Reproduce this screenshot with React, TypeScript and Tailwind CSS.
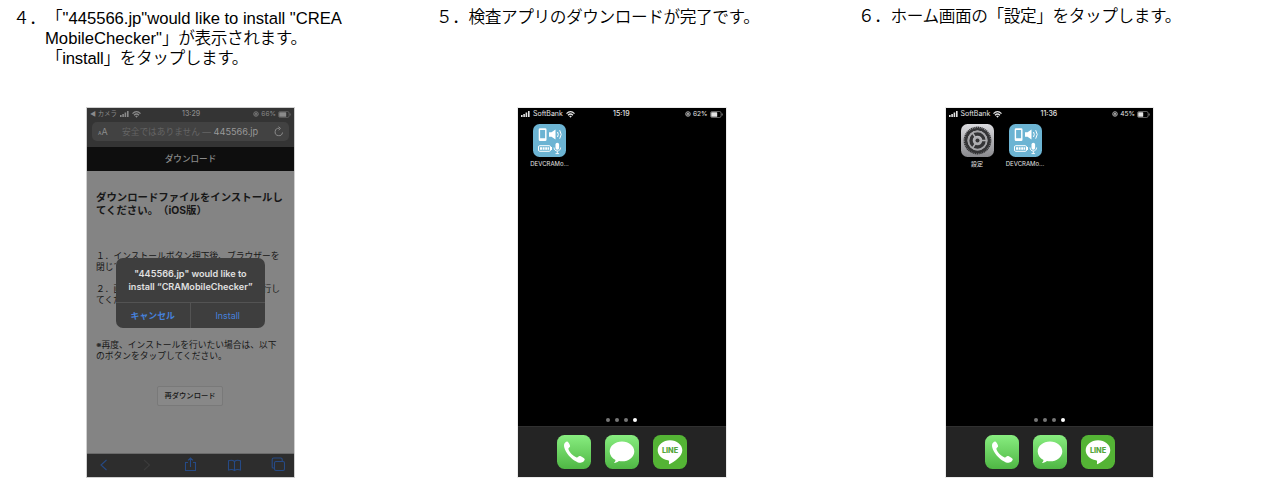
import type { ReactNode } from "react";

const sans = "font-['Liberation_Sans','Noto_Sans_CJK_JP',sans-serif]";
const ui = "font-['Inter','Noto_Sans_CJK_JP',sans-serif]";

function Wifi() {
  return (
    <svg width="9" height="7" viewBox="0 0 18 14" fill="none" stroke="currentColor" strokeWidth="2.6">
      <path d="M1 5.2c4.8-4.6 11.2-4.6 16 0M4 8.4c3-2.8 7-2.8 10 0" />
      <path d="M6.4 10.6c1.6-1.2 3.6-1.2 5.2 0L9 13.4z" fill="currentColor" stroke="none" />
    </svg>
  );
}

function Signal() {
  return (
    <svg width="9" height="6" viewBox="0 0 9 6" fill="currentColor">
      <path d="M0 4h1.6v2H0zM2.3 3h1.6v3H2.3zM4.6 1.5h1.6V6H4.6zM7 0h1.6v6H7z" />
    </svg>
  );
}

function Battery({ level }: { level: number }) {
  return (
    <svg width="13" height="7" viewBox="0 0 13 7" fill="none">
      <rect x=".5" y=".5" width="10.6" height="6" rx="1.6" stroke="currentColor" strokeWidth=".7" opacity=".6" />
      <rect x="1.2" y="1.2" width={level} height="4.6" rx=".6" fill="currentColor" />
      <path d="M12.2 2.5v2" stroke="currentColor" strokeWidth=".8" opacity=".7" />
    </svg>
  );
}

function Lock() {
  return (
    <svg width="6" height="6" viewBox="0 0 6 6" fill="none" stroke="currentColor" strokeWidth=".7">
      <circle cx="3" cy="3" r="2.3" />
      <path d="M2 2.8h2v1.2H2zM2.4 2.7V2h1.2v.7" strokeWidth=".6" />
    </svg>
  );
}

function Status({ left, time, pct, level }: { left: ReactNode; time: string; pct: string; level: number }) {
  return (
    <div className="grid h-3 shrink-0 grid-cols-[84px_40px_1fr] items-center pl-[3px] pr-[3px] text-[6.6px] leading-3 whitespace-nowrap">
      <div className="flex items-center gap-[3px]">{left}</div>
      <div className="pl-[8px] text-[7px] font-medium">{time}</div>
      <div className="flex items-center justify-end gap-[2px]">
        <Lock />
        <span>{pct}</span>
        <Battery level={level} />
      </div>
    </div>
  );
}

function CheckerIcon() {
  return (
    <svg width="33" height="33" viewBox="0 0 33 33">
      <rect width="33" height="33" rx="6.500" fill="#6cb4d3" />
      <g fill="#fff">
        <path fillRule="evenodd" d="M7 4.3h5.2A1.3 1.3 0 0 1 13.500 5.600v10.200a1.300 1.300 0 0 1-1.300 1.300H7a1.300 1.300 0 0 1-1.300-1.300V5.600A1.300 1.300 0 0 1 7 4.300zM7.100 6v8.300h5V6z" />
        <path d="M16 8.200h2.500L22.500 5.500v10L18.500 12.800H16z" />
      </g>
      <path d="M24.500 8q1.600 2.400 0 5M26.700 6.200q3 4.200 0 8.500" fill="none" stroke="#fff" strokeWidth="1" />
      <rect x="5.500" y="21.700" width="12" height="5.600" rx="1.200" fill="none" stroke="#fff" strokeWidth="1" />
      <path d="M7 23.200h2v2.600H7zm2.600 0h2v2.600h-2zm2.600 0h2v2.600h-2zm2.500 0h1.500v2.600h-1.500zM18 23h1v3h-1z" fill="#fff" />
      <rect x="22.500" y="18.800" width="3.600" height="7" rx="1.800" fill="#fff" />
      <path d="M21 23.500c0 4.700 6.600 4.700 6.600 0M24.300 27v2.800M22.500 29.600h3.600" fill="none" stroke="#fff" strokeWidth=".9" />
    </svg>
  );
}

function SettingsIcon() {
  return (
    <svg width="33" height="33" viewBox="0 0 33 33" fill="none">
      <defs>
        <linearGradient id="metal" x2="0" y2="1">
          <stop stopColor="#dcdce0" />
          <stop offset="1" stopColor="#89898d" />
        </linearGradient>
      </defs>
      <rect width="33" height="33" rx="6.500" fill="url(#metal)" />
      <circle cx="16.500" cy="16.500" r="13" stroke="#343436" strokeWidth="1.800" strokeDasharray="1.300 .5" />
      <circle cx="16.500" cy="16.500" r="11.300" stroke="#343436" strokeWidth="2.600" />
      <circle cx="16.500" cy="16.500" r="9.300" stroke="#a4a4a7" strokeWidth="1.400" />
      <circle cx="16.500" cy="16.500" r="6.500" stroke="#343436" strokeWidth="3.400" />
      <path d="M16.500 16.500h9M16.500 16.500l-5-7.500M16.500 16.500l-5 7.500" stroke="#aeaeb1" strokeWidth="1.500" />
      <circle cx="16.500" cy="16.500" r="3.400" fill="#aeaeb1" />
      <circle cx="16.500" cy="16.500" r="2" fill="#343436" />
    </svg>
  );
}

function Phone() {
  return (
    <svg width="34" height="34" viewBox="0 0 34 34">
      <defs>
        <linearGradient id="green" x2="0" y2="1">
          <stop stopColor="#88ed80" />
          <stop offset="1" stopColor="#4fb744" />
        </linearGradient>
      </defs>
      <rect width="34" height="34" rx="7.500" fill="url(#green)" />
      <path d="M7 10.200C7 8.300 9 6.300 10.300 6.500c1 .2 2.900 3.500 2.800 4.700 0 1.100-2 1.600-1.700 2.800.8 3 4.800 7.300 8.200 8.400 1.300.4 1.800-1.500 3-1.500 1.300 0 4.900 2 5.100 3.200.2 1.400-1.800 3.700-4.200 3.700C17.500 27.800 7 17.500 7 10.200z" fill="#fff" />
    </svg>
  );
}

function Messages() {
  return (
    <svg width="34" height="34" viewBox="0 0 34 34">
      <rect width="34" height="34" rx="7.500" fill="url(#green)" />
      <path d="M17 6.400c-6.900 0-12.300 4.400-12.300 10 0 3.600 2.300 6.700 5.800 8.500-.1 1.200-.8 2.200-1.600 3 2.200-.1 3.800-.9 5-1.900 1 .2 2 .3 3.100.3 6.900 0 12.300-4.400 12.300-9.900s-5.400-10-12.300-10z" fill="#fff" />
    </svg>
  );
}

function Line() {
  return (
    <svg width="34" height="34" viewBox="0 0 34 34">
      <rect width="34" height="34" rx="7.500" fill="#54b435" />
      <path d="M17 5.300c-6.800 0-12.300 4.500-12.300 10 0 4.900 4.300 9 10.200 9.900 1.400.3 1.300.9 1 3.500 0 .6.400.7.900.4 4.600-2.500 12.500-7.500 12.500-13.800 0-5.500-5.500-10-12.300-10z" fill="#fff" />
      <text x="17" y="18" textAnchor="middle" fontFamily="Inter" fontWeight="800" fontSize="7.300" fill="#54a63a">LINE</text>
    </svg>
  );
}

function HomeApp({ icon, label }: { icon: ReactNode; label: string }) {
  return (
    <div className="flex w-[33px] flex-col items-center">
      {icon}
      <span className="mt-[2px] text-[6px] leading-[9px] whitespace-nowrap">{label}</span>
    </div>
  );
}

function Home({ time, pct, level, settings }: { time: string; pct: string; level: number; settings?: boolean }) {
  return (
    <div className={`flex h-[369px] w-[207.5px] flex-col bg-black text-[#e4e4e4] outline-1 outline-[#d8d8d8]/50 ${ui}`}>
      <Status
        left={<><Signal /><span className="text-[7px]">SoftBank</span><Wifi /></>}
        time={time}
        pct={pct}
        level={level}
      />
      <div className="flex flex-1 gap-[15px] pl-[15px] pt-[4px]">
        {settings && <HomeApp icon={<SettingsIcon />} label="設定" />}
        <HomeApp icon={<CheckerIcon />} label="DEVCRAMo..." />
      </div>
      <div className="flex h-[8px] justify-center gap-[5px]">
        <i className="size-[4px] rounded-full bg-[#777]" />
        <i className="size-[4px] rounded-full bg-[#777]" />
        <i className="size-[4px] rounded-full bg-[#777]" />
        <i className="size-[4px] rounded-full bg-white" />
      </div>
      <div className="flex h-[51px] gap-[14px] border-t border-[#303030] bg-[#242424] pl-[39px] pt-[8px]">
        <Phone />
        <Messages />
        <Line />
      </div>
    </div>
  );
}

function Browser() {
  return (
    <div className={`relative flex h-[369px] w-[207px] flex-col bg-[#848484] whitespace-nowrap text-[#171717] outline-1 outline-[#d0d0d0] ${ui}`}>
      <div className="h-[39px] bg-[#343434] text-[#8b8b8b]">
        <Status
          left={<><span className="text-[6.400px]">◀ カメラ</span><Signal /><Wifi /></>}
          time="13:29"
          pct="66%"
          level={7}
        />
        <div className="mx-[5px] mt-[2px] flex h-[19px] items-center rounded-[5px] bg-[#424242] pl-[6px] pr-[4px]">
          <span className="w-6 text-[7px]">ᴀ<span className="text-[9px]">A</span></span>
          <span className="flex-1 text-[8.700px] leading-3 text-[#656565]">安全ではありません — <span className="text-[9.200px] text-[#999]">445566.jp</span></span>
          <svg width="12" height="12" viewBox="0 0 12 12" fill="none" stroke="currentColor" strokeWidth="1">
            <path d="M9.500 6.500a3.700 3.700 0 1 1-3.200-4.200M5.500.7l2 1.700-1.800 1.800" />
          </svg>
        </div>
      </div>
      <div className="h-6 bg-[#0e0e0e] text-center text-[8.600px] leading-6 font-medium text-[#8a8a8a]">ダウンロード</div>
      <div className="flex-1 pl-[9px] pt-[20px]">
        <div className="text-[10.400px] leading-[13px] font-bold [text-spacing-trim:space-all]">ダウンロードファイルをインストールし<br />てください。（iOS版）</div>
        <div className="mt-[34px] text-[8.750px] leading-[11px]">１．インストールボタン押下後、ブラウザーを</div>
        <div className="w-[20px] overflow-hidden text-[8.750px] leading-[11px]">閉じて</div>
        <div className="mt-[11px] flex justify-between pr-[14px] text-[8.750px] leading-[11px]"><span className="w-[20px] overflow-hidden">２．画</span><span>行し</span></div>
        <div className="w-[20px] overflow-hidden text-[8.750px] leading-[11px]">てくだ</div>
        <div className="mt-[34px] text-[8.750px] leading-[11px]">※再度、インストールを行いたい場合は、以下<br />のボタンをタップしてください。</div>
        <div className="ml-[61px] mt-[24px] h-[20px] w-[66px] rounded-[2px] border border-[#797979] bg-[#888] text-center text-[7.300px] leading-[18px] font-medium">再ダウンロード</div>
      </div>
      <div className="flex h-6 border-t border-[#6a6a6a] bg-[#2d2d2d] text-[#264a85]">
        <svg width="207" height="23" viewBox="0 0 207 23" fill="none" stroke="currentColor" strokeWidth="1.100">
          <path d="M19.500 6l-5.500 5 5.500 5" />
          <path d="M57 6l5.500 5-5.500 5" stroke="#3b3b3b" />
          <path d="M101 8.500h-2.500v8h10v-8H106M103.500 13V4M101 6.300L103.500 4l2.500 2.300" />
          <path d="M147.500 7.500c-1.500-1.500-4-1.500-6-.8v9.300c2-.7 4.500-.7 6 .6 1.500-1.300 4-1.300 6-.6V6.700c-2-.7-4.500-.7-6 .8zM147.500 7.500v9" />
          <path d="M187.500 14h-1.300a1 1 0 0 1-1-1V5.500a1.500 1.500 0 0 1 1.500-1.500h7a1.500 1.500 0 0 1 1.500 1.500v2M189 7.500h7a1.500 1.500 0 0 1 1.500 1.500v6a1.500 1.500 0 0 1-1.500 1.500h-7a1.500 1.500 0 0 1-1.500-1.500v-6A1.500 1.500 0 0 1 189 7.500z" />
        </svg>
      </div>
      <div className="absolute left-[29px] top-[150px] h-[70px] w-[149px] rounded-[7px] bg-[#3e3e3e] text-center text-[#e0e0e0]">
        <div className="h-[45px] border-b border-[#535353] pt-[10px] text-[9.150px] leading-[12.500px] font-semibold">"445566.jp" would like to<br />install “CRAMobileChecker”</div>
        <div className="grid h-[25px] grid-cols-2 text-[8.900px] leading-[25px] text-[#4681dc]">
          <span className="border-r border-[#535353] font-bold">キャンセル</span>
          <span>Install</span>
        </div>
      </div>
    </div>
  );
}

const step = "h-[108px] text-[16.670px] leading-[20px] font-[350] tracking-[-0.4px] whitespace-nowrap text-black";

export default function App() {
  return (
    <main className={`grid h-[498px] w-[1266px] grid-cols-[431px_428px_407px] overflow-hidden bg-white ${sans}`}>
      <section>
        <div className={`${step} pl-[13px] pt-[9px]`}>
          <div className="flex"><span className="w-[33px]">４．</span><span className="tracking-[-0.04px]">「"445566.jp"would like to install "CREA</span></div>
          <div className="pl-[32px]"><span className="tracking-normal">MobileChecker"</span>」が表示されます。</div>
          <div className="pl-[33px]">「<span className="tracking-[-0.2px]">install</span>」をタップします。</div>
        </div>
        <div className="pl-[87px]"><Browser /></div>
      </section>
      <section>
        <div className={`${step} pl-[5px] pt-[8px]`}>５．検査アプリのダウンロードが完了です。</div>
        <div className="pl-[87px]"><Home time="15:19" pct="62%" level={6} /></div>
      </section>
      <section>
        <div className={`${step} pt-[7px]`}><span className="ml-[-1px]">６．ホーム画面の「設定」をタップします。</span></div>
        <div className="pl-[86.500px]"><Home time="11:36" pct="45%" level={5} settings /></div>
      </section>
    </main>
  );
}
